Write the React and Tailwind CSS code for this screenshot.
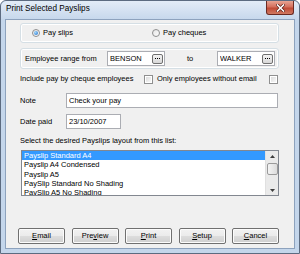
import React from 'react';

const font = "font-['Liberation_Sans',Arial,sans-serif]";

const Radio = ({ checked }) => (
    <span className="w-[8px] h-[8px] rounded-full border border-[#8e8f8f] bg-gradient-to-br from-[#e6e6e6] to-[#fdfdfd] flex items-center justify-center shrink-0">
        {checked && <span className="w-[4px] h-[4px] rounded-full bg-[radial-gradient(circle_at_35%_35%,#9fd8ff,#1c6ac4)]" />}
    </span>
);

const Check = () => (
    <span className="w-[9px] h-[9px] border border-[#8f8f8f] bg-white p-[1px] shrink-0 flex">
        <span className="flex-1 bg-gradient-to-br from-[#dcdcdc] to-[#f8f8f8]" />
    </span>
);

const Ellipsis = () => (
    <span className="w-[11px] h-[10px] rounded-[2px] border border-[#707070] bg-gradient-to-b from-[#f4f4f4] to-[#d8d8d8] flex items-center justify-center gap-[1px] shrink-0">
        <span className="w-[1px] h-[1px] bg-black" />
        <span className="w-[1px] h-[1px] bg-black" />
        <span className="w-[1px] h-[1px] bg-black" />
    </span>
);

const Field = ({ value, width, children }) => (
    <div className={`h-[15px] border border-[#abadb3] bg-white flex items-center pl-[2px] pr-[1px] ${width}`}>
        <span className="flex-1 truncate">{value}</span>
        {children}
    </div>
);

const Btn = ({ u, rest }) => (
    <button className="w-[48px] h-[16px] rounded-[2px] border border-[#707070] bg-[linear-gradient(#f2f2f2_0%,#ebebeb_50%,#dddddd_50%,#cfcfcf_100%)] shadow-[inset_0_0_0_1px_#fcfcfc] flex items-center justify-center leading-none">
        <span><span className="underline">{u}</span>{rest}</span>
    </button>
);

const layouts = [
    'Payslip Standard A4',
    'Payslip A4 Condensed',
    'Payslip A5',
    'PaySlip Standard No Shading',
    'PaySlip A5 No Shading',
];

export default function App() {
    return (
        <div className={`w-[300px] h-[254px] bg-[#c4d6eb] border border-[#5c6b80] rounded-t-[6px] flex flex-col text-[7.5px] text-black ${font}`}>
            {/* title bar */}
            <div className="h-[18px] flex items-start justify-between rounded-t-[6px] bg-gradient-to-b from-[#e3ecf7] to-[#c7d8ec]">
                <span className="pl-[5px] pt-[3px] text-[8.2px] leading-[10px]">Print Selected Payslips</span>
                <div className="mr-[5px] w-[28px] h-[14px] rounded-b-[3px] border border-t-0 border-[#6b2a22] bg-[linear-gradient(#e8a493_0%,#d46f5c_45%,#c04a35_55%,#d07a62_100%)] flex items-center justify-center">
                    <svg width="9" height="8" viewBox="0 0 9 8">
                        <path d="M1.5 1 L7.5 7 M7.5 1 L1.5 7" stroke="#5a1d14" strokeWidth="3" strokeLinecap="square" />
                        <path d="M1.5 1 L7.5 7 M7.5 1 L1.5 7" stroke="#ffffff" strokeWidth="1.6" strokeLinecap="square" />
                    </svg>
                </div>
            </div>

            {/* client area */}
            <div className="mx-[4px] h-[230px] border border-[#8da2bd] bg-[#f0f0f0] flex flex-col pl-[14px] pr-[15px]">
                <div className="mt-[3px] h-[20px] rounded-[3px] border border-[#d5dfe5] shadow-[inset_0_0_0_1px_#ffffff] flex items-center pl-[11px]">
                    <div className="w-[120px] flex items-center gap-[3px]">
                        <Radio checked />
                        <span>Pay slips</span>
                    </div>
                    <div className="flex items-center gap-[3px]">
                        <Radio />
                        <span>Pay cheques</span>
                    </div>
                </div>

                <div className="mt-[5px] h-[21px] rounded-[3px] border border-[#d5dfe5] shadow-[inset_0_0_0_1px_#ffffff] flex items-center pl-[4px]">
                    <span className="w-[82px]">Employee range from</span>
                    <Field value="BENSON" width="w-[58px]"><Ellipsis /></Field>
                    <span className="w-[52px] pl-[22px]">to</span>
                    <Field value="WALKER" width="w-[58px]"><Ellipsis /></Field>
                </div>

                <div className="mt-[4px] h-[12px] flex items-center">
                    <span className="w-[124px]">Include pay by cheque employees</span>
                    <Check />
                    <span className="ml-[4px] w-[112px]">Only employees without email</span>
                    <Check />
                </div>

                <div className="mt-[8px] flex items-center">
                    <span className="w-[46px]">Note</span>
                    <Field value="Check your pay" width="w-[212px]" />
                </div>

                <div className="mt-[6px] flex items-center">
                    <span className="w-[46px]">Date paid</span>
                    <Field value="23/10/2007" width="w-[55px]" />
                </div>

                <div className="mt-[7px] h-[10px] flex items-center">Select the desired Payslips layout from this list:</div>

                <div className="mt-[4px] ml-[1px] h-[46px] border border-[#828790] bg-white flex">
                    <div className="flex-1 overflow-hidden">
                        {layouts.map((l, i) => (
                            <div
                                key={l}
                                className={`h-[9.25px] leading-[9.25px] pl-[2px] ${i === 0 ? 'bg-[#3399ff] text-white' : ''}`}
                            >
                                {l}
                            </div>
                        ))}
                    </div>
                    <div className="w-[13px] bg-[#eaeaea] border-l border-[#e0e0e0] flex flex-col items-center">
                        <div className="h-[10px] flex items-center justify-center">
                            <svg width="5" height="3" viewBox="0 0 5 3"><path d="M0 3 L2.5 0 L5 3 Z" fill="#3d3d3d" /></svg>
                        </div>
                        <div className="mt-[2px] w-[11px] h-[12px] rounded-[2px] border border-[#9a9a9a] bg-gradient-to-r from-[#f4f4f4] to-[#dcdcdc]" />
                        <div className="flex-1" />
                        <div className="h-[10px] flex items-center justify-center">
                            <svg width="5" height="3" viewBox="0 0 5 3"><path d="M0 0 L2.5 3 L5 0 Z" fill="#3d3d3d" /></svg>
                        </div>
                    </div>
                </div>

                <div className="mt-[32px] -ml-[2px] flex gap-[6.5px]">
                    <Btn u="E" rest="mail" />
                    <Btn u="" rest={<>Pre<span className="underline">v</span>iew</>} />
                    <Btn u="P" rest="rint" />
                    <Btn u="S" rest="etup" />
                    <Btn u="C" rest="ancel" />
                </div>
            </div>
        </div>
    );
}
